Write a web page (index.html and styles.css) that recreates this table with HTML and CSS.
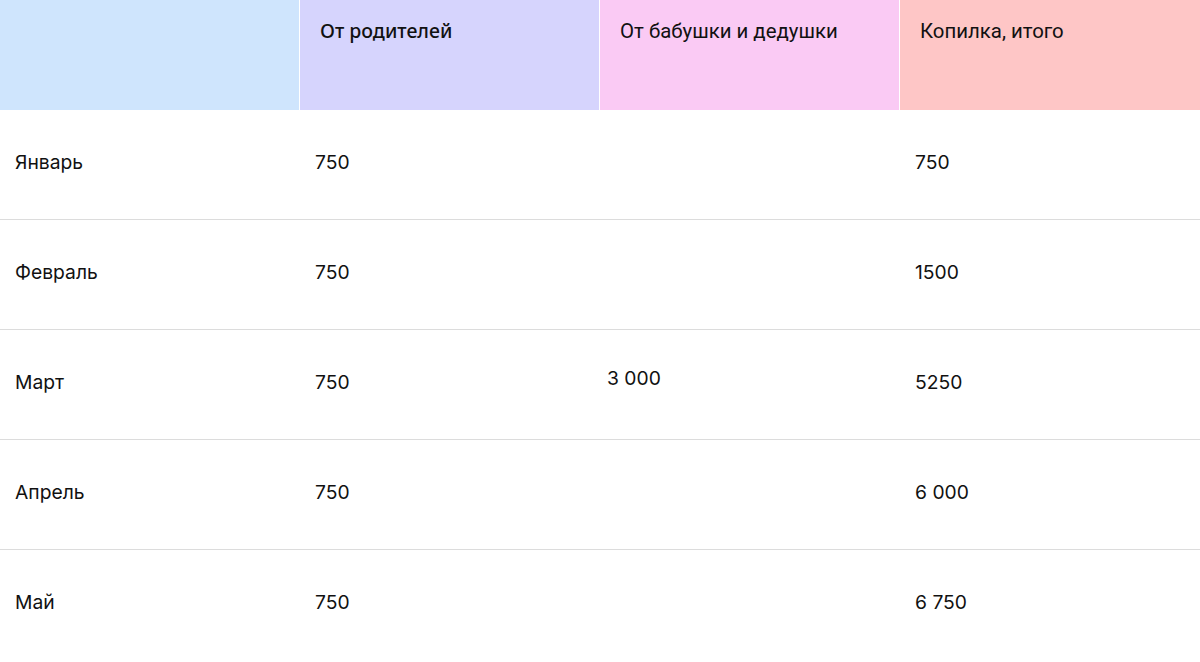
FILE: index.html
```html
<!DOCTYPE html>
<html lang="ru">
<head>
<meta charset="utf-8">
<link rel="stylesheet" href="styles.css">
</head>
<body>
<div class="table">
  <div class="head">
    <div class="hcell c1"></div>
    <div class="hcell c2">От родителей</div>
    <div class="hcell c3">От бабушки и дедушки</div>
    <div class="hcell c4">Копилка, итого</div>
  </div>
  <div class="row">
    <div class="cell first">Январь</div>
    <div class="cell">750</div>
    <div class="cell"></div>
    <div class="cell">750</div>
  </div>
  <div class="row">
    <div class="cell first">Февраль</div>
    <div class="cell">750</div>
    <div class="cell"></div>
    <div class="cell">1500</div>
  </div>
  <div class="row">
    <div class="cell first">Март</div>
    <div class="cell">750</div>
    <div class="cell grand">3 000</div>
    <div class="cell">5250</div>
  </div>
  <div class="row">
    <div class="cell first">Апрель</div>
    <div class="cell">750</div>
    <div class="cell"></div>
    <div class="cell">6 000</div>
  </div>
  <div class="row last">
    <div class="cell first">Май</div>
    <div class="cell">750</div>
    <div class="cell"></div>
    <div class="cell">6 750</div>
  </div>
</div>
</body>
</html>
```
FILE: styles.css
```css
html, body {
  margin: 0;
  padding: 0;
  background: #ffffff;
}
.table {
  width: 1200px;
  font-family: "Inter", "Noto Sans", sans-serif;
  color: #111;
}
.head {
  display: grid;
  grid-template-columns: 299px 299px 299px 300px;
  column-gap: 1px;
  height: 110px;
}
.hcell {
  padding: 19px 0 0 20px;
  font-family: "Noto Sans", sans-serif;
  font-size: 19.5px;
  line-height: 24px;
  font-weight: 500;
  color: #111;
}
.c1 { background: #cfe5fd; }
.c2 { background: #d6d4fd; }
.c3 { background: #facaf4; font-family: "Roboto", sans-serif; font-size: 20.4px; font-weight: 400; }
.c4 { background: #fec6c6; font-family: "Roboto", sans-serif; font-size: 20.4px; font-weight: 400; }
.row {
  display: grid;
  grid-template-columns: 300px 300px 300px 300px;
  height: 109px;
  border-bottom: 1px solid #dcdcdc;
  align-items: center;
}
.row.last { border-bottom: none; }
.cell {
  padding: 0 0 6px 15px;
  font-size: 19.3px;
  line-height: 24px;
}
.cell.grand {
  padding-left: 7px;
  padding-bottom: 14px;
}
```
